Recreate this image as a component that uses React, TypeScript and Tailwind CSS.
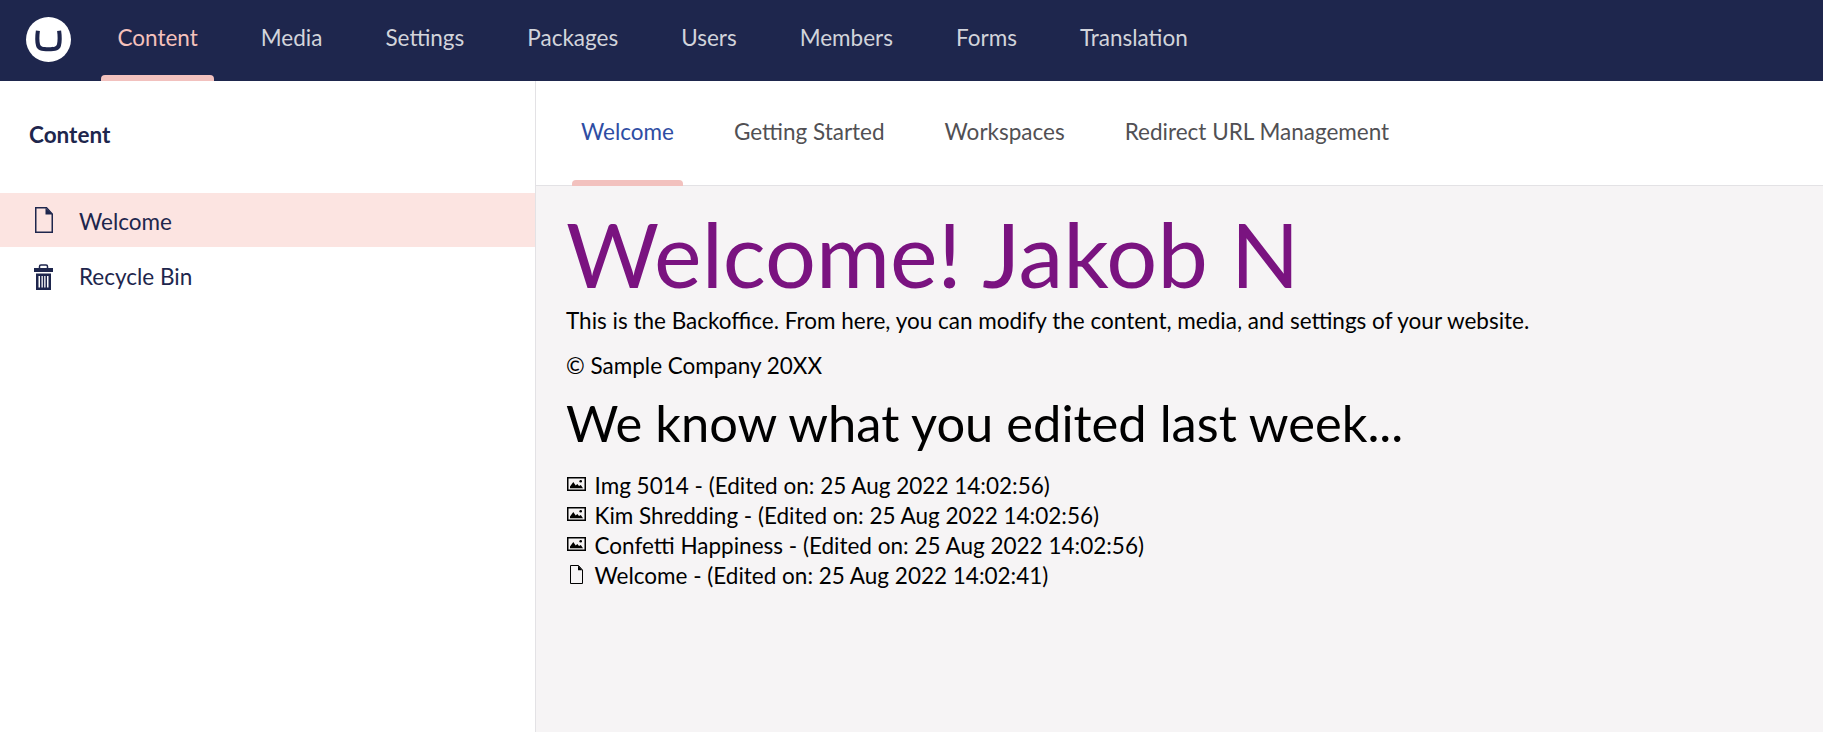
const sections = ["Content", "Media", "Settings", "Packages", "Users", "Members", "Forms", "Translation"];
const tabs = ["Welcome", "Getting Started", "Workspaces", "Redirect URL Management"];
const edits = [
  { name: "Img 5014", date: "25 Aug 2022 14:02:56", kind: "image" },
  { name: "Kim Shredding", date: "25 Aug 2022 14:02:56", kind: "image" },
  { name: "Confetti Happiness", date: "25 Aug 2022 14:02:56", kind: "image" },
  { name: "Welcome", date: "25 Aug 2022 14:02:41", kind: "document" },
];

function Logo() {
  return (
    <svg className="block h-[45px] w-[45px]" viewBox="0 0 45 45">
      <circle cx="22.5" cy="22.5" r="22.5" fill="#fff" />
      <path d="M9.9 13.4L13.9 14C13.2 19 13.2 24 14 27.300C14.700 29.700 17 30.300 22.500 30.300S30.300 29.700 31 27.300C31.800 24 31.800 19 31.100 14L35.100 13.400C36 19 36 25 34.900 29C33.700 33 30 34.300 22.500 34.300S11.300 33 10.100 29C9 25 9 19 9.900 13.400Z" fill="#1e264d" />
    </svg>
  );
}

function DocumentIcon() {
  return (
    <svg className="h-[26px] w-[18px]" viewBox="0 0 18 26" fill="none">
      <path d="M0.750 0.750H11.500L17.250 7V25.250H0.750Z" stroke="currentColor" strokeWidth="1.500" />
      <path d="M10.500 1V7.500H17.500Z" fill="currentColor" />
    </svg>
  );
}

function SmallDocumentIcon() {
  return (
    <svg className="h-[19px] w-[13px]" viewBox="0 0 13 19" fill="none">
      <path d="M0.500 0.500H8.500L12.500 5V18.500H0.500Z" stroke="currentColor" />
      <path d="M8 0.500V5.200H12.500Z" fill="currentColor" />
    </svg>
  );
}

function TrashIcon() {
  return (
    <svg className="h-[26px] w-[19px]" viewBox="0 0 19 26">
      <path d="M5.500 4V2.500Q5.500 1 7 1H12Q13.500 1 13.500 2.500V4" fill="none" stroke="currentColor" strokeWidth="1.500" />
      <path d="M0 4H19V8H0Z" fill="currentColor" />
      <path fillRule="evenodd" d="M2 9.500H17V26H2ZM4.500 12V23.500H6V12ZM7.500 12V23.500H8.800V12ZM10.200 12V23.500H11.500V12ZM13 12V23.500H14.500V12Z" fill="currentColor" />
    </svg>
  );
}

function ImageIcon() {
  return (
    <svg className="h-[14px] w-[19px]" viewBox="0 0 19 14">
      <rect x="0.750" y="0.750" width="17.500" height="12.500" fill="none" stroke="currentColor" strokeWidth="1.500" />
      <path d="M3 11.200V9.500L6.300 5L8.700 8.500L10.300 7L12 9L13.800 8L16 11.200Z" fill="currentColor" />
      <circle cx="13.700" cy="4.300" r="1.300" fill="currentColor" />
    </svg>
  );
}

export default function App() {
  return (
    <div className="flex h-[732px] w-full flex-col overflow-hidden bg-white font-['Lato',sans-serif] text-[22.5px] leading-[30px]">
      <header className="flex h-[81px] shrink-0 bg-[#1e264d] pl-[26px]">
        <div className="pt-[17px]"><Logo /></div>
        <nav className="ml-[16px] flex gap-px">
          {sections.map((s, i) => (
            <a key={s} className={i === 0 ? "mr-[0.5px] flex flex-col px-[14px] text-[#f5c1bc]" : "flex flex-col px-[14px] text-[#d2d4db]"}>
              <span className={i === 0 ? "flex h-[75px] items-center px-[16.5px] pt-px" : "flex h-[75px] items-center px-[17px] pt-px"}>{s}</span>
              {i === 0 && <span className="h-1.5 rounded-t-[4px] bg-[#f2c1be]" />}
            </a>
          ))}
        </nav>
      </header>
      <div className="flex min-h-0 flex-1">
        <aside className="w-[536px] shrink-0 border-r border-[#e3e2e5] text-[#1e264d]">
          <h2 className="flex h-[112px] items-center pb-[5px] pl-[29px] font-bold">Content</h2>
          <div className="flex h-[54px] items-center bg-[#fce4e1]">
            <span className="w-[79px] pl-[35px]"><DocumentIcon /></span>
            <span className="pt-[3px]">Welcome</span>
          </div>
          <div className="flex h-[56px] items-center pt-[3px]">
            <span className="w-[79px] pl-[34px]"><TrashIcon /></span>
            <span>Recycle Bin</span>
          </div>
        </aside>
        <main className="flex min-w-0 flex-1 flex-col bg-[#f6f4f5] text-black">
          <div className="flex h-[105px] shrink-0 border-b border-[#e3e2e5] bg-white pl-[16px]">
            {tabs.map((t, i) => (
              <a key={t} className={i === 0 ? "flex h-[105px] flex-col pr-[21px] pl-5 text-[#2e4da3]" : "flex flex-col px-5 text-[#515054]"}>
                <span className={i === 0 ? "flex h-[99px] items-center pr-[9px] pl-[9px] pt-0.5" : "flex h-[99px] items-center px-[10px] pt-0.5"}>{t}</span>
                {i === 0 && <span className="h-1.5 rounded-t-[4px] bg-[#f2c1be]" />}
              </a>
            ))}
          </div>
          <div className="pl-[30px]">
            <h1 className="mt-[22px] text-[90px] leading-[90px] text-[#7a1380]">Welcome! Jakob N</h1>
            <p className="mt-[8px]">This is the Backoffice. From here, you can modify the content, media, and settings of your website.</p>
            <p className="mt-[15px]">© Sample Company 20XX</p>
            <h2 className="mt-[12px] text-[50.65px] leading-[60px]">We know what you edited last week...</h2>
            <ul className="mt-[18px]">
              {edits.map((e) => (
                <li key={e.name} className="flex h-[30px]">
                  <span className="w-[28.5px] shrink-0">
                    {e.kind === "image" ? <span className="block pt-[6px] pl-px"><ImageIcon /></span> : <span className="block pt-[4px] pl-[4px]"><SmallDocumentIcon /></span>}
                  </span>
                  <span>{e.name} - (Edited on: {e.date})</span>
                </li>
              ))}
            </ul>
          </div>
        </main>
      </div>
    </div>
  );
}
